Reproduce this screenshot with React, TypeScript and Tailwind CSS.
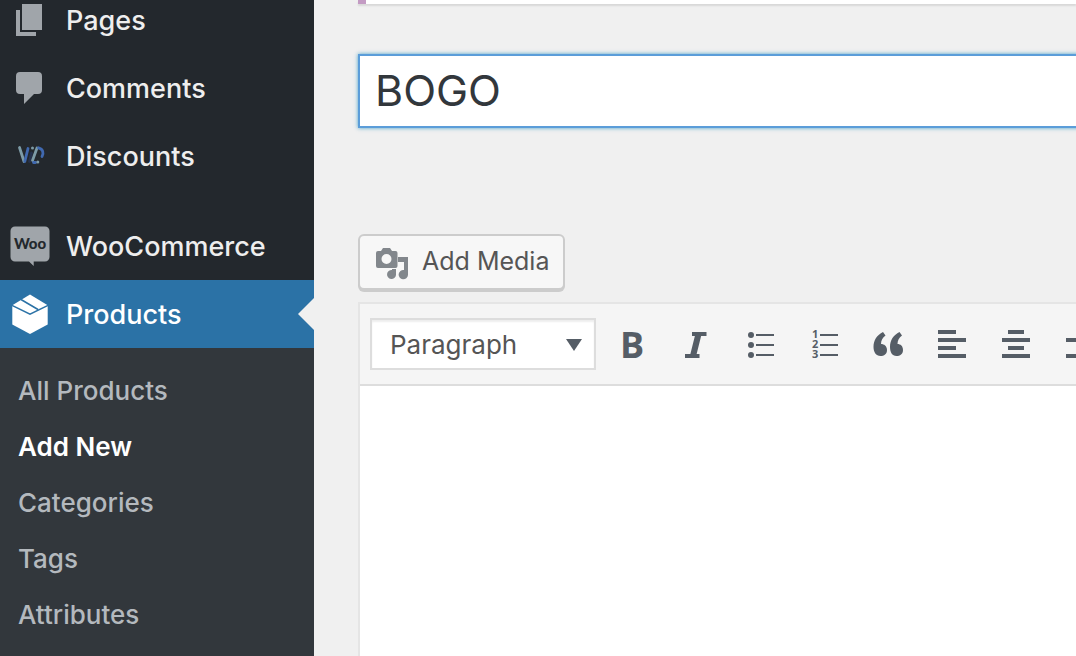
import React, { useState } from "react";

const PagesIcon = () => (
  <svg className="h-10 w-10" viewBox="0 0 40 40" fill="currentColor" aria-hidden="true">
    <path d="M12 4h20v26H12z" />
    <path d="M6 10h4v22h16v4H6z" />
  </svg>
);

const CommentsIcon = () => (
  <svg className="h-10 w-10" viewBox="0 0 40 40" fill="currentColor" aria-hidden="true">
    <path d="M10 4h18a4 4 0 0 1 4 4v14a4 4 0 0 1-4 4h-4L14 36V26h-4a4 4 0 0 1-4-4V8a4 4 0 0 1 4-4z" />
  </svg>
);

const DiscountsIcon = () => (
  <svg className="h-10 w-10" viewBox="0 0 40 40" fill="none" strokeWidth="2.8" strokeLinecap="round" aria-hidden="true">
    <path d="M21.5 17L19.5 25.5" stroke="#26324d" />
    <path d="M9.5 11.5L14 25.5" stroke="#7d9ba6" />
    <path d="M18 12.5L14.8 25.5" stroke="#4069b0" />
    <path d="M27 12L22.5 24.5" stroke="#7d9ba6" />
    <path d="M28.5 11.8C33 13 34 17 32 20.5" stroke="#4069b0" />
    <path d="M23.5 26.5h2" stroke="#4069b0" />
    <circle cx="22.5" cy="12" r="1.5" fill="#7d9ba6" />
    <circle cx="27.8" cy="26" r="1.5" fill="#7d9ba6" />
  </svg>
);

const WooIcon = () => (
  <svg className="h-10 w-10" viewBox="0 0 40 40" aria-hidden="true">
    <path
      fill="currentColor"
      d="M5 .5h30a4.5 4.5 0 0 1 4.500 4.500v26a4.500 4.500 0 0 1-4.500 4.500H23.700V40L19 35.500H5A4.500 4.500 0 0 1 .5 31V5A4.500 4.500 0 0 1 5 .5z"
    />
    <text x="20" y="23" textAnchor="middle" className="fill-[#23282d] font-['Lato'] text-[15px] font-black">
      Woo
    </text>
  </svg>
);

const ProductsIcon = () => (
  <svg className="h-10 w-10" viewBox="0 0 40 40" aria-hidden="true">
    <path fill="currentColor" d="M20 .5l17.700 10.800v19.200L20 40 2.300 30.500V11.300z" />
    <path className="stroke-[#2b72a6]" fill="none" strokeWidth="1.500" d="M2 11.300l18 8.900 18-8.900M11 5.500l17 10" />
  </svg>
);

const menu = [
  { label: "Pages", icon: <PagesIcon /> },
  { label: "Comments", icon: <CommentsIcon /> },
  { label: "Discounts", icon: <DiscountsIcon /> },
];

const subMenu = ["All Products", "Add New", "Categories", "Tags", "Attributes"];

const MenuItem = ({ label, icon }: { label: string; icon: React.ReactNode }) => (
  <li>
    <a href="#" className="flex h-17 items-center gap-4 pl-2.5 text-[27px] font-medium text-[#eee]">
      <span className="text-[#a0a5aa]">{icon}</span>
      <span className="pt-0.5">{label}</span>
    </a>
  </li>
);

const tools = [
  {
    label: "Bold",
    icon: (
      <text x="20" y="33" textAnchor="middle" className="font-['Open_Sans'] text-[36px] font-bold">
        B
      </text>
    ),
  },
  {
    label: "Italic",
    icon: (
      <g fill="none" stroke="currentColor">
        <path strokeWidth="4" d="M16 9h14.500M9 31h14.500" />
        <path strokeWidth="6" d="M22.500 9l-5.500 22" />
      </g>
    ),
  },
  {
    label: "Bulleted list",
    icon: (
      <>
        <circle cx="11" cy="10" r="3" />
        <circle cx="11" cy="20" r="3" />
        <circle cx="11" cy="30" r="3" />
        <path d="M16 9h18v2H16zM16 19h18v2H16zM16 29h18v2H16z" />
      </>
    ),
  },
  {
    label: "Numbered list",
    icon: (
      <>
        <g className="font-['Open_Sans'] text-[11px] font-bold">
          <text x="8" y="13">1</text>
          <text x="8" y="23">2</text>
          <text x="8" y="33">3</text>
        </g>
        <path d="M16 9h18v2H16zM16 19h18v2H16zM16 29h18v2H16z" />
      </>
    ),
  },
  {
    label: "Blockquote",
    icon: (
      <>
        <path d="M15 7l2.500 3.500c-3 2-4.500 5-4.500 8.500 3 0 6 2 6 6s-3 6-6.500 6C8 31 5.500 27 5.500 22 5.500 15 9 10 15 7z" />
        <path d="M31.500 7l2.500 3.500c-3 2-4.500 5-4.500 8.500 3 0 5.500 2 5.500 6s-3 6-6.500 6c-4.500 0-6.500-4-6.500-9 0-7 3.500-12 9.500-15z" />
      </>
    ),
  },
  {
    label: "Align left",
    icon: <path d="M6 5h18v4H6zM6 13h28v4H6zM6 21h18v4H6zM6 29h28v4H6z" />,
  },
  {
    label: "Align center",
    icon: <path d="M12 5h16v4H12zM6 13h28v4H6zM12 21h16v4H12zM6 29h28v4H6z" />,
  },
  {
    label: "Align right",
    icon: <path d="M16 5h18v4H16zM6 13h28v4H6zM16 21h18v4H16zM6 29h28v4H6z" />,
  },
];

const App = () => {
  const [title, setTitle] = useState("BOGO");

  return (
    <div className="flex h-screen overflow-hidden bg-[#f0f0f0] font-['Inter',sans-serif]">
      {/* Admin menu */}
      <nav className="w-[314px] shrink-0 bg-[#23282d]">
        <ul className="-mt-3.5">
          {menu.map((item) => (
            <MenuItem key={item.label} label={item.label} icon={item.icon} />
          ))}
        </ul>
        <ul className="pt-[22px]">
          <MenuItem label="WooCommerce" icon={<WooIcon />} />
          <li>
            <a
              href="#"
              className="relative flex h-17 items-center gap-4 bg-[#2b72a6] pl-2.5 text-[27px] font-medium text-white"
            >
              <ProductsIcon />
              <span className="pt-0.5">Products</span>
              <span className="absolute top-1/2 right-0 -translate-y-1/2 border-y-16 border-r-16 border-y-transparent border-r-[#f0f0f0]" />
            </a>
          </li>
        </ul>
        <ul className="h-full bg-[#32373c] pt-3.5">
          {subMenu.map((label) => (
            <li key={label}>
              <a
                href="#"
                className={
                  label === "Add New"
                    ? "flex h-14 items-center pl-[18px] text-[26px] font-semibold text-white"
                    : "flex h-14 items-center pl-[18px] text-[26px] font-medium text-[#b4b9be]"
                }
              >
                {label}
              </a>
            </li>
          ))}
        </ul>
      </nav>

      {/* Editor */}
      <main className="flex min-w-0 flex-1 flex-col pl-11">
        <div className="h-1 shrink-0 border-l-8 border-[#c39bc3] bg-white shadow-[0_2px_2px_rgba(0,0,0,0.1)]" />

        <input
          type="text"
          aria-label="Product name"
          value={title}
          onChange={(e) => setTitle(e.target.value)}
          className="-mr-2 mt-[50px] h-[74px] shrink-0 border-2 border-[#5b9dd9] bg-white px-[15px] pb-0.5 text-[43px] text-[#32373c] shadow-[0_0_4px_rgba(30,140,190,0.8)] outline-none"
        />

        <button
          type="button"
          className="mt-[106px] flex h-14 shrink-0 items-center gap-2.5 self-start rounded-md border-2 border-[#ccc] bg-[#f7f7f7] pr-3.5 pl-3 text-[25px] text-[#555] shadow-[0_2px_0_#ccc]"
        >
          <svg className="h-10 w-10 text-[#82878c]" viewBox="0 0 40 40" fill="currentColor" aria-hidden="true">
            <path
              fillRule="evenodd"
              d="M11 6h7l2 3h3.500a2 2 0 0 1 2 2v13a2 2 0 0 1-2 2H6a2 2 0 0 1-2-2V11a2 2 0 0 1 2-2h3zM14.500 12a5 5 0 1 0 0 10 5 5 0 0 0 0-10z"
            />
            <path d="M26 15h10v18a4.700 4.700 0 1 1-4-5v-8h-6z" />
            <path d="M20 27h4v6a4.500 4.500 0 1 1-4-5z" />
          </svg>
          Add Media
        </button>

        <section className="-mr-2 mt-3 flex flex-1 flex-col border-2 border-b-0 border-[#e5e5e5] bg-white">
          <div className="flex h-[82px] shrink-0 items-center overflow-hidden border-b-2 border-[#ddd] bg-[#f5f5f5] pl-2.5">
            <div className="relative w-[226px] shrink-0">
              <select
                aria-label="Block format"
                className="h-[52px] w-full appearance-none border-2 border-[#ddd] bg-white pl-[18px] text-[26px] text-[#555] shadow-[inset_0_2px_2px_rgba(0,0,0,0.07)]"
              >
                <option>Paragraph</option>
              </select>
              <svg
                className="pointer-events-none absolute top-[21px] right-3.5 h-3 w-4 text-[#555d66]"
                viewBox="0 0 16 12"
                fill="currentColor"
                aria-hidden="true"
              >
                <path d="M0 0h16L8 12z" />
              </svg>
            </div>
            <div className="flex gap-6 pt-0.5 pl-4">
              {tools.map((tool) => (
                <button key={tool.label} type="button" aria-label={tool.label} className="shrink-0 text-[#555d66]">
                  <svg className="h-10 w-10 overflow-visible" viewBox="0 0 40 40" fill="currentColor" aria-hidden="true">
                    {tool.icon}
                  </svg>
                </button>
              ))}
            </div>
          </div>
        </section>
      </main>
    </div>
  );
};

export default App;
